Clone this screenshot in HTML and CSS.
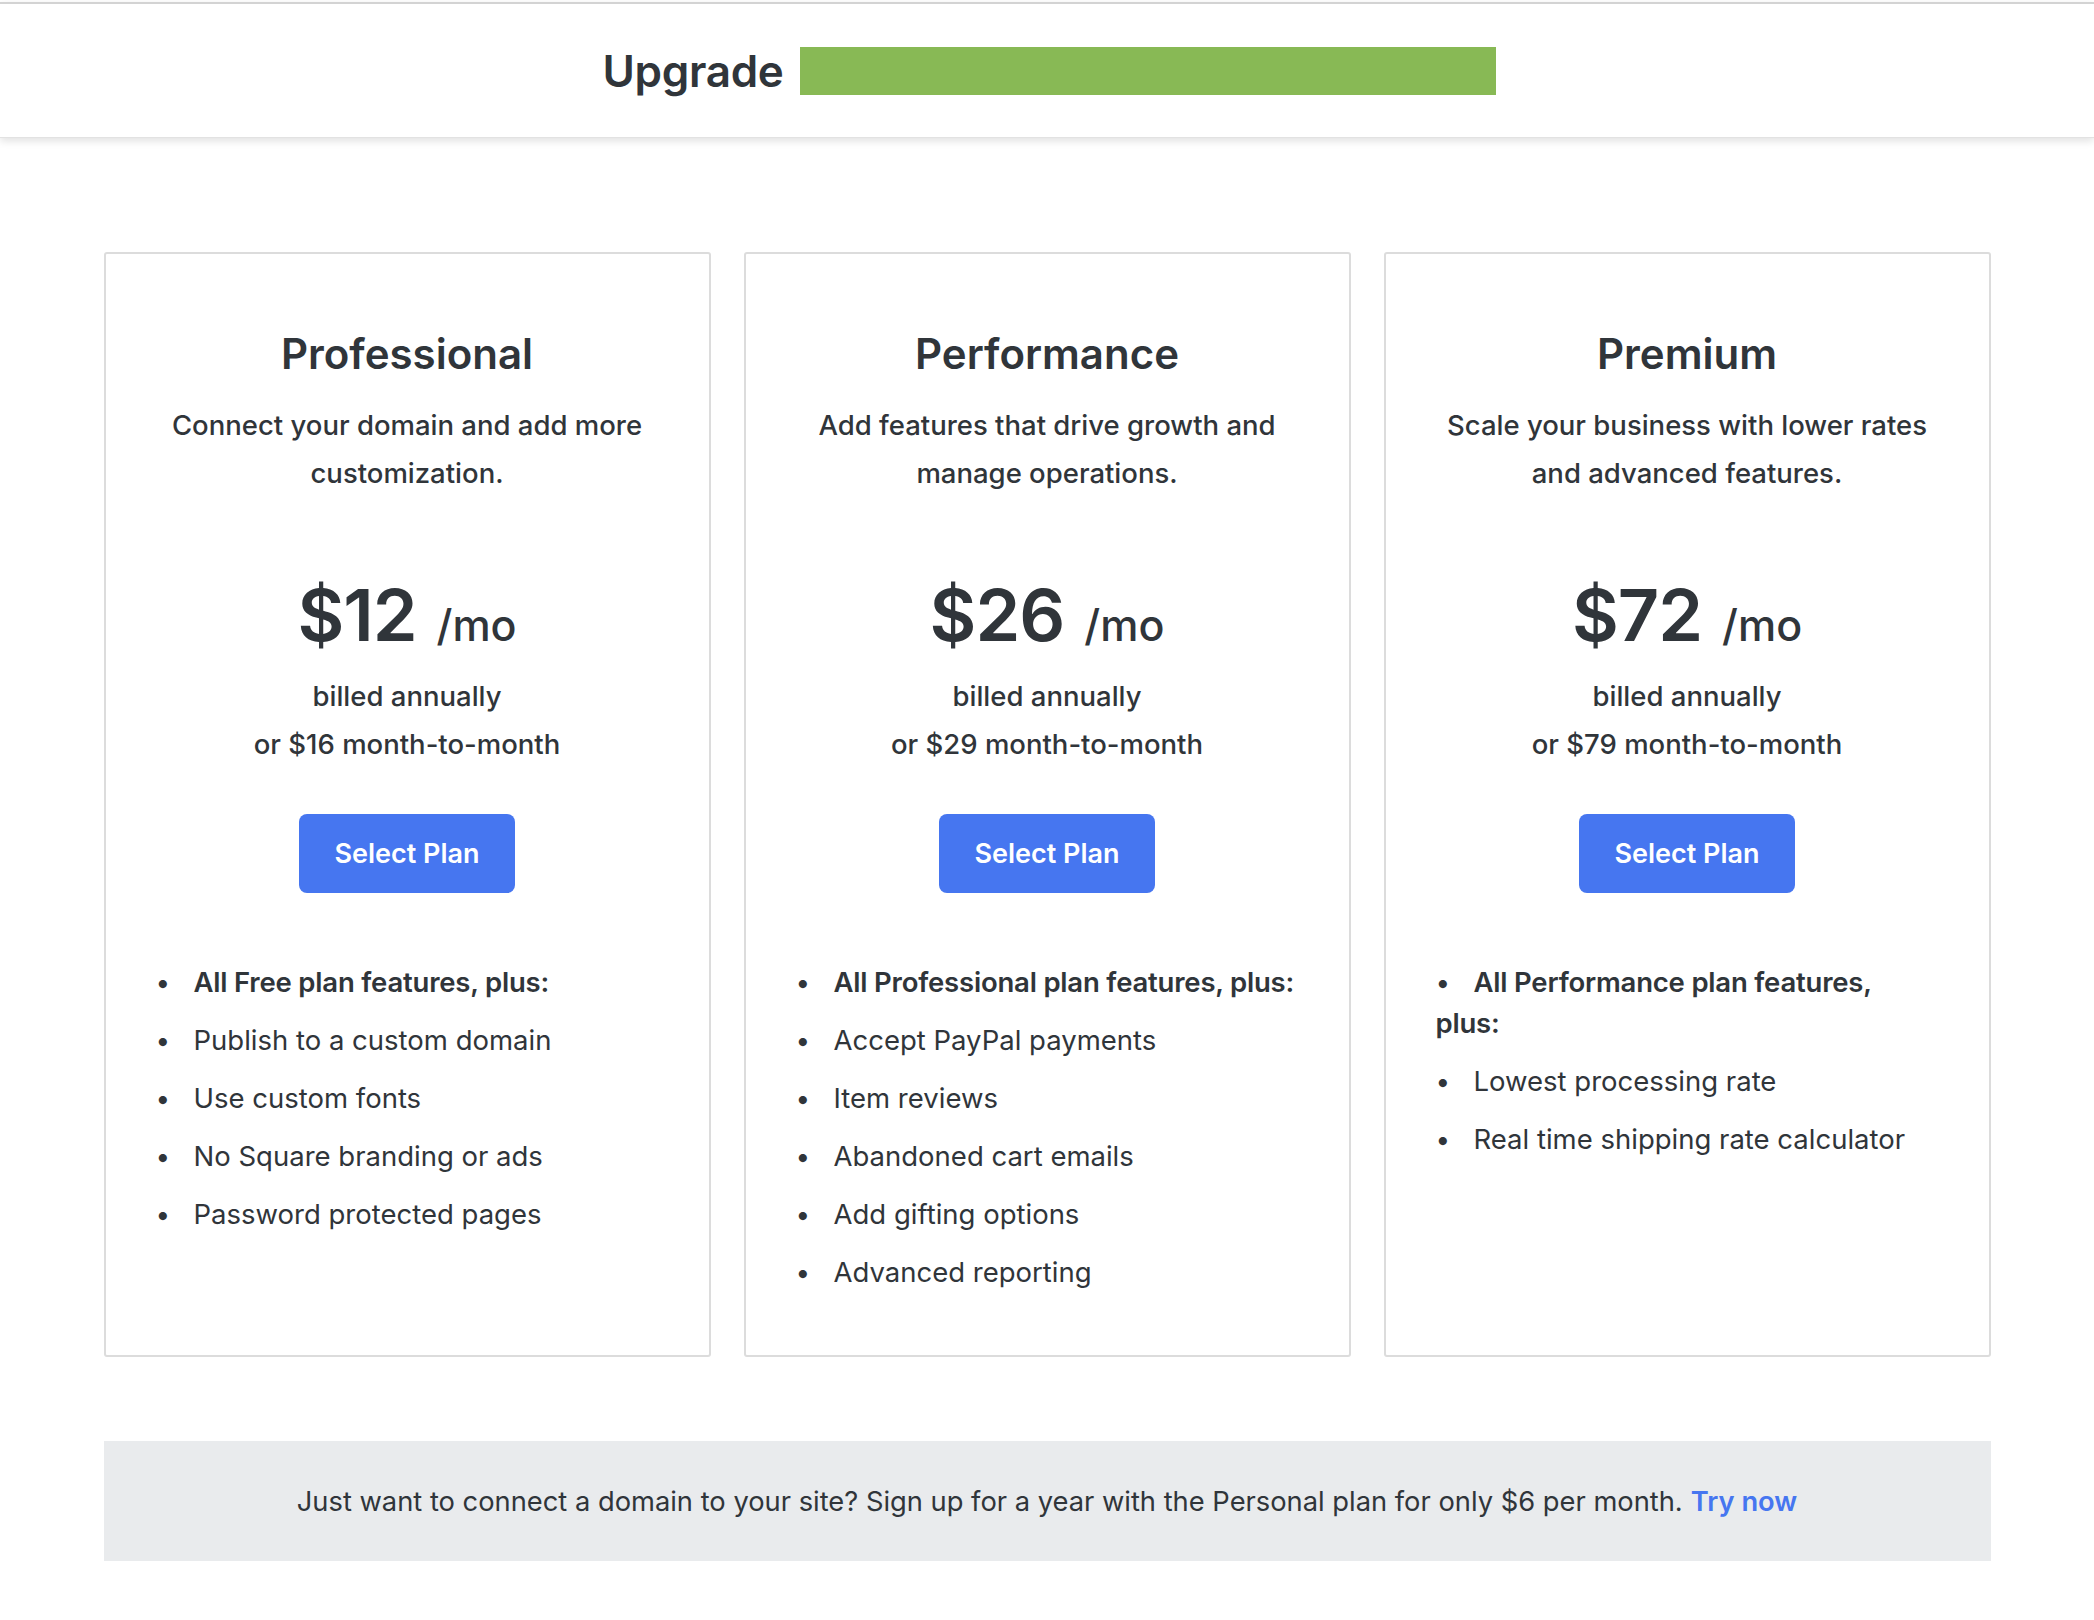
FILE: index.html
```html
<!DOCTYPE html>
<html lang="en">
<head>
<meta charset="utf-8">
<title>Upgrade</title>
<link rel="stylesheet" href="styles.css">
</head>
<body>
<header class="topbar">
  <h1 class="topbar-title">Upgrade</h1>
  <div class="topbar-bar"></div>
</header>

<main class="page">
  <section class="plans">
    <article class="plan">
      <h2 class="plan-name">Professional</h2>
      <p class="plan-desc">Connect your domain and add more customization.</p>
      <div class="plan-price"><span class="amount">$12</span><span class="per">/mo</span></div>
      <p class="plan-billing">billed annually<br>or $16 month-to-month</p>
      <div class="plan-action"><button class="btn">Select Plan</button></div>
      <ul class="features">
        <li class="lead">All Free plan features, plus:</li>
        <li>Publish to a custom domain</li>
        <li>Use custom fonts</li>
        <li>No Square branding or ads</li>
        <li>Password protected pages</li>
      </ul>
    </article>

    <article class="plan">
      <h2 class="plan-name">Performance</h2>
      <p class="plan-desc">Add features that drive growth and manage operations.</p>
      <div class="plan-price"><span class="amount">$26</span><span class="per">/mo</span></div>
      <p class="plan-billing">billed annually<br>or $29 month-to-month</p>
      <div class="plan-action"><button class="btn">Select Plan</button></div>
      <ul class="features">
        <li class="lead">All Professional plan features, plus:</li>
        <li>Accept PayPal payments</li>
        <li>Item reviews</li>
        <li>Abandoned cart emails</li>
        <li>Add gifting options</li>
        <li>Advanced reporting</li>
      </ul>
    </article>

    <article class="plan">
      <h2 class="plan-name">Premium</h2>
      <p class="plan-desc">Scale your business with lower rates and advanced features.</p>
      <div class="plan-price"><span class="amount">$72</span><span class="per">/mo</span></div>
      <p class="plan-billing">billed annually<br>or $79 month-to-month</p>
      <div class="plan-action"><button class="btn">Select Plan</button></div>
      <ul class="features">
        <li class="lead">All Performance plan features, plus:</li>
        <li>Lowest processing rate</li>
        <li>Real time shipping rate calculator</li>
      </ul>
    </article>
  </section>

  <aside class="promo">
    Just want to connect a domain to your site? Sign up for a year with the Personal plan for only $6 per month. <a class="promo-link" href="#">Try now</a>
  </aside>
</main>
</body>
</html>
```

FILE: styles.css
```css
html, body {
  margin: 0;
  padding: 0;
  background: #ffffff;
}

body {
  font-family: Inter, "Noto Sans", "Liberation Sans", sans-serif;
  color: #30353a;
  padding-top: 2px;
}

.topbar {
  border-top: 2px solid #d3d3d3;
  height: 136px;
  box-sizing: border-box;
  display: flex;
  align-items: center;
  justify-content: center;
  box-shadow: 0 3px 8px rgba(0, 0, 0, 0.12);
  border-bottom: 1px solid #e2e2e2;
}

.topbar-title {
  margin: 0 16px 0 4px;
  font-size: 44px;
  font-weight: 600;
  letter-spacing: -0.3px;
  color: #30353a;
}

.topbar-bar {
  width: 696px;
  height: 48px;
  background: #88b955;
}

.page {
  width: 1887px;
  margin: 114px auto 0;
}

.plans {
  display: grid;
  grid-template-columns: repeat(3, 1fr);
  column-gap: 33px;
}

.plan {
  border: 2px solid #dcdcdc;
  border-radius: 3px;
  padding: 72px 50px 45px;
  text-align: center;
}

.plan-name {
  margin: 0;
  font-size: 42px;
  line-height: 56px;
  font-weight: 600;
}

.plan-desc {
  margin: 19px auto 0;
  font-size: 27.5px;
  line-height: 48px;
  font-weight: 500;
  max-width: 500px;
}

.plan-price {
  margin-top: 82px;
  line-height: 72px;
}

.amount {
  font-size: 72px;
  font-weight: 600;
  letter-spacing: -1px;
}

.per {
  font-size: 43px;
  font-weight: 500;
  margin-left: 20px;
}

.plan-billing {
  margin: 1px 0 0;
  font-size: 27.5px;
  line-height: 48px;
  font-weight: 500;
}

.plan-action {
  margin-top: 46px;
}

.btn {
  width: 216px;
  height: 79px;
  border: 0;
  border-radius: 8px;
  background: #4676f0;
  color: #ffffff;
  font-family: inherit;
  font-size: 27px;
  font-weight: 600;
  cursor: pointer;
}

.features {
  list-style: none;
  margin: 69px 0 0;
  padding: 0;
  text-align: left;
  font-size: 27.5px;
  line-height: 41px;
}

.features li {
  margin-bottom: 17px;
}

.features li::before {
  content: "\2022";
  display: inline-block;
  width: 38px;
  font-size: 26px;
  font-weight: 400;
}

.features .lead {
  font-weight: 600;
  letter-spacing: -0.2px;
}

.promo {
  margin-top: 84px;
  height: 120px;
  background: #e9ebed;
  display: flex;
  align-items: center;
  justify-content: center;
  font-size: 27.3px;
}

.promo-link {
  color: #4676f0;
  font-weight: 600;
  text-decoration: none;
  margin-left: 8px;
}
```
